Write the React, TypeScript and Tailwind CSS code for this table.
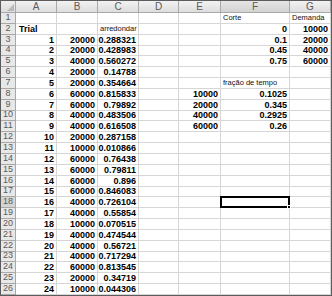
type Kind = "num" | "bold" | "small";

const cols = ["A", "B", "C", "D", "E", "F", "G"];

const trials: [string, string][] = [
  ["20000", "0.288321"],
  ["20000", "0.428983"],
  ["40000", "0.560272"],
  ["20000", "0.14788"],
  ["20000", "0.354664"],
  ["60000", "0.815833"],
  ["60000", "0.79892"],
  ["40000", "0.483506"],
  ["40000", "0.616508"],
  ["20000", "0.287158"],
  ["10000", "0.010866"],
  ["60000", "0.76438"],
  ["60000", "0.79811"],
  ["60000", "0.896"],
  ["60000", "0.846083"],
  ["40000", "0.726104"],
  ["40000", "0.55854"],
  ["10000", "0.070515"],
  ["40000", "0.474544"],
  ["40000", "0.56721"],
  ["40000", "0.717294"],
  ["60000", "0.813545"],
  ["20000", "0.34719"],
  ["10000", "0.044306"],
];

const extra: Record<string, [string, Kind]> = {
  F1: ["Corte", "small"],
  G1: ["Demanda", "small"],
  A2: ["Trial", "bold"],
  C2: ["arredondar", "small"],
  F2: ["0", "num"],
  G2: ["10000", "num"],
  F3: ["0.1", "num"],
  G3: ["20000", "num"],
  F4: ["0.45", "num"],
  G4: ["40000", "num"],
  F5: ["0.75", "num"],
  G5: ["60000", "num"],
  F7: ["fração de tempo", "small"],
  E8: ["10000", "num"],
  F8: ["0.1025", "num"],
  E9: ["20000", "num"],
  F9: ["0.345", "num"],
  E10: ["40000", "num"],
  F10: ["0.2925", "num"],
  E11: ["60000", "num"],
  F11: ["0.26", "num"],
};

const cellAt = (row: number, col: string): [string, Kind] | null => {
  if (row >= 3) {
    const t = trials[row - 3];
    if (col === "A") return [String(row - 2), "num"];
    if (col === "B") return [t[0], "num"];
    if (col === "C") return [t[1], "num"];
  }
  return extra[col + row] ?? null;
};

const SEL_ROW = 18;
const SEL_COL = "F";

const Cell = ({ row, col }: { row: number; col: string }) => {
  const c = cellAt(row, col);
  const selected = row === SEL_ROW && col === SEL_COL;
  return (
    <div className="relative flex items-end overflow-visible border-b border-r border-[#d6d6d6] bg-white">
      {c && c[1] === "num" && (
        <span className="w-full pr-[2px] text-right text-[9px] font-bold leading-[9px] text-black">
          {c[0]}
        </span>
      )}
      {c && c[1] === "bold" && (
        <span className="pl-[3px] text-[9px] font-bold leading-[9px] text-black">{c[0]}</span>
      )}
      {c && c[1] === "small" && (
        <span className="whitespace-nowrap pl-[2px] pb-[1px] text-[7.5px] leading-[8px] text-[#111]">
          {c[0]}
        </span>
      )}
      {selected && (
        <div className="absolute -left-[1px] -top-[1px] z-10 h-[calc(100%+2px)] w-[calc(100%+2px)] border-2 border-black">
          <div className="absolute -bottom-[3px] -right-[3px] h-[4px] w-[4px] border border-white bg-black" />
        </div>
      )}
    </div>
  );
};

export default function App() {
  const rows = Array.from({ length: 26 }, (_, i) => i + 1);

  return (
    <div className="h-[296px] w-[332px] overflow-hidden border border-[#5c5c5c] bg-white font-['Liberation_Sans',Arial,sans-serif]">
      <div className="grid h-[294px] grid-cols-[15px_41px_41px_41px_40px_42px_69px_41px] grid-rows-[12px_repeat(26,minmax(0,1fr))]">
        <div className="relative border-b border-r border-[#a8a8a8] bg-gradient-to-b from-[#eeeeee] to-[#dcdcdc]">
          <svg className="absolute bottom-[1px] right-[1px]" width="7" height="7" viewBox="0 0 7 7">
            <path d="M7 0 L7 7 L0 7 Z" fill="#b9b9b9" />
          </svg>
        </div>
        {cols.map((c) => (
          <div
            key={c}
            className={`flex items-center justify-center border-b border-r border-[#a8a8a8] bg-gradient-to-b text-[10px] leading-none text-[#5a5a5a] ${
              c === SEL_COL ? "from-[#e6e6e6] to-[#d2d2d2]" : "from-[#f2f2f2] to-[#dedede]"
            }`}
          >
            {c}
          </div>
        ))}
        {rows.map((r) => (
          <div key={r} className="contents">
            <div
              className={`flex items-end justify-center border-b border-r border-[#a8a8a8] pb-[1px] text-[9px] leading-[9px] text-[#5a5a5a] ${
                r === SEL_ROW ? "bg-[#d4d4d4]" : "bg-[#e8e8e8]"
              }`}
            >
              {r}
            </div>
            {cols.map((c) => (
              <Cell key={c} row={r} col={c} />
            ))}
          </div>
        ))}
      </div>
    </div>
  );
}
